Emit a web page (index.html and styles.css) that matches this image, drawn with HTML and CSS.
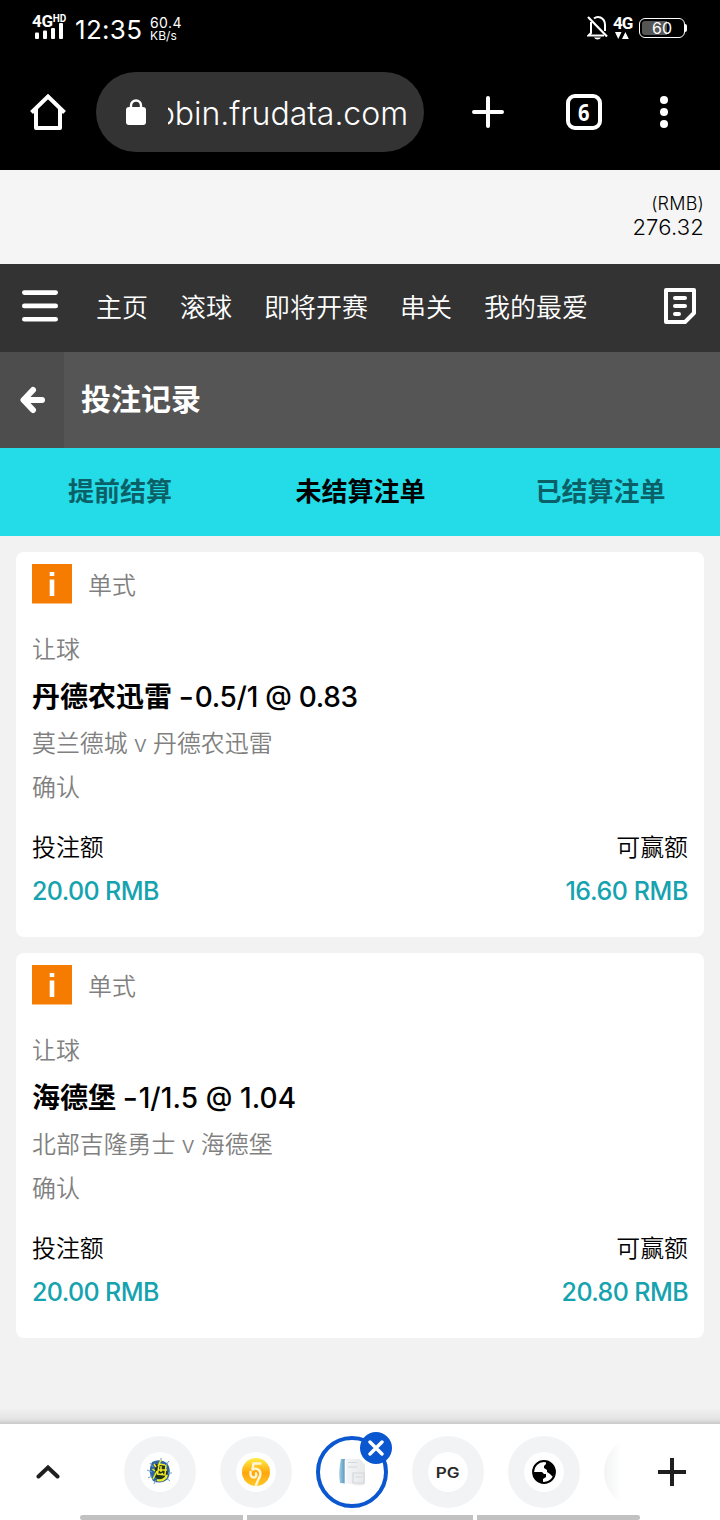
FILE: index.html
```html
<!DOCTYPE html>
<html lang="zh-CN">
<head>
<meta charset="utf-8">
<title>投注记录</title>
<link rel="stylesheet" href="styles.css">
</head>
<body>
<header class="status">
  <div class="signal">
    <div class="net">4G<span class="hd">HD</span></div>
    <svg class="bars" width="30" height="16" viewBox="0 0 30 16" fill="#fff"><rect x="0" y="9.500" width="4" height="6.500" rx="1"/><rect x="8" y="7.500" width="4" height="8.500" rx="1"/><rect x="16" y="5" width="4" height="11" rx="1"/><rect x="24" y="0" width="4" height="16" rx="1"/></svg>
  </div>
  <div class="clock">12:35</div>
  <div class="speed"><span>60.4</span><span class="unit">KB/s</span></div>
  <div class="spacer"></div>
  <svg class="bell" width="22" height="25" viewBox="0 0 22 25" fill="none" stroke="#fff" stroke-width="2"><path d="M7 3.500Q10 1 13.500 2.500Q18 4.500 18 10V16M4 7V18L1.500 20.500H17" /><path d="M1 2L20 21.500" stroke-width="2.200"/><path d="M7 22.500H14Q13 24.500 10.500 24.500Q8 24.500 7 22.500Z" fill="#fff" stroke="none"/></svg>
  <div class="data"><span>4G</span><svg width="14" height="7" viewBox="0 0 14 7" fill="#fff"><path d="M0 0H6.500L3.250 7ZM7 7H13.800L10.400 0Z"/></svg></div>
  <div class="battery"><span class="level">60</span></div>
  <i class="cap"></i>
</header>
<nav class="browser">
  <svg class="home" width="36" height="36" viewBox="0 0 36 36" fill="none" stroke="#fff" stroke-width="4" stroke-linejoin="round"><path d="M1.500 18.500L18 2.500L34.500 18.500" stroke-linejoin="miter"/><path d="M6 15V34H30V15"/></svg>
  <div class="address">
    <svg class="lock" width="20" height="26" viewBox="0 0 20 26"><path d="M5 10V6.500A5 5 0 0 1 15 6.500V10" fill="none" stroke="#fff" stroke-width="2.400"/><rect y="8" width="20" height="18" rx="3" fill="#fff"/></svg>
    <div class="url"><span>obin.frudata.com</span></div>
  </div>
  <svg class="add" width="32" height="32" viewBox="0 0 32 32" stroke="#fff" stroke-width="4" stroke-linecap="round"><path d="M2 16H30M16 2V30"/></svg>
  <div class="tabcount"><span>6</span></div>
  <svg class="more" width="8" height="32" viewBox="0 0 8 32" fill="#fff"><circle cx="4" cy="4" r="4"/><circle cx="4" cy="16" r="4"/><circle cx="4" cy="28" r="4"/></svg>
</nav>
<section class="balance"><div class="currency">(RMB)</div><div class="amount">276.32</div></section>
<nav class="menu">
  <svg width="36" height="32" viewBox="0 0 36 32" stroke="#fff" stroke-width="4.600" stroke-linecap="round"><path d="M2.300 2.600H33.700M2.300 15.900H33.700M2.300 29.200H33.700"/></svg>
  <div class="links"><a>主页</a><a>滚球</a><a>即将开赛</a><a>串关</a><a>我的最爱</a></div>
  <svg width="32" height="36" viewBox="0 0 32 36" fill="none" stroke="#fff" stroke-width="4" stroke-linejoin="round"><path d="M2 2H30V25L21 34H2Z"/><path d="M11 10H21M11 18H21M11 26H15" stroke-linecap="round"/></svg>
</nav>
<div class="titlebar">
  <div class="back"><svg width="26" height="28" viewBox="0 0 26 28" fill="none" stroke="#fff" stroke-width="6" stroke-linecap="round" stroke-linejoin="round"><path d="M13 4L3.500 14L13 24M4 14H22"/></svg></div>
  <h1>投注记录</h1>
</div>
<div class="tabs"><a>提前结算</a><a class="active">未结算注单</a><a>已结算注单</a></div>
<main class="list">
  <article class="card">
    <div class="head"><svg width="40" height="40" viewBox="0 0 40 40"><rect width="40" height="39.500" fill="#f57c00"/><path d="M17.700 8H22.300V12H17.700ZM17.700 15.500H22.300V32H17.700Z" fill="#fff"/></svg><span>单式</span></div>
    <div class="row">让球</div>
    <h2>丹德农迅雷 <span class="odds"><span class="minus">-</span>0.5/1 <span class="at">@</span> 0.83</span></h2>
    <div class="row match">莫兰德城 v 丹德农迅雷</div>
    <div class="row state">确认</div>
    <div class="pair label"><span>投注额</span><span>可赢额</span></div>
    <div class="pair money"><span>20.00 RMB</span><span class="first">16.60 RMB</span></div>
  </article>
  <article class="card">
    <div class="head"><svg width="40" height="40" viewBox="0 0 40 40"><rect width="40" height="39.500" fill="#f57c00"/><path d="M17.700 8H22.300V12H17.700ZM17.700 15.500H22.300V32H17.700Z" fill="#fff"/></svg><span>单式</span></div>
    <div class="row">让球</div>
    <h2>海德堡 <span class="odds second"><span class="minus">-</span>1/1.5 <span class="at">@</span> 1.04</span></h2>
    <div class="row match">北部吉隆勇士 v 海德堡</div>
    <div class="row state">确认</div>
    <div class="pair label"><span>投注额</span><span>可赢额</span></div>
    <div class="pair money"><span>20.00 RMB</span><span>20.80 RMB</span></div>
  </article>
</main>
<div class="fade"></div>
<footer class="dock">
  <svg class="up" width="24" height="16" viewBox="0 0 24 16" fill="none" stroke="#1f1f1f" stroke-width="4" stroke-linecap="round"><path d="M2.500 12.500L12 3.500L21.500 12.500"/></svg>
  <div class="strip">
    <div class="site"><div class="disc"><svg width="30" height="30" viewBox="0 0 30 30"><path d="M7 5Q15 1 22 6Q27 13 23 22Q16 28 8 24Q2 15 7 5Z" fill="#2d66a0"/><path d="M5 6L8 10M16 1V5M24 4L20 9M27 16H22M25 24L20 20M9 27L11 23M2 13L7 15M3 21L7 19" stroke="#6f9ccd" stroke-width="1"/><path d="M10 20Q17 27 23 16L20 8L10 7Z" fill="#22341c"/><path d="M9 7L11 10M7.500 12L10 14M8 22L12 14M16 3L13 9M14 7L20 8M14 8L12.500 17L20 18L21 8M13 13H22M16 9V15M17 16L18 18" fill="none" stroke="#f3ea28" stroke-width="1.500"/><path d="M12 23Q19 25 22 18" fill="none" stroke="#f3ea28" stroke-width="2.200"/></svg></div></div>
    <div class="site"><div class="disc"><svg width="30" height="30" viewBox="0 0 30 30"><defs><linearGradient id="gold" x2="0" y2="1"><stop stop-color="#ffed45"/><stop offset=".55" stop-color="#ffa60b"/><stop offset="1" stop-color="#ffc928"/></linearGradient></defs><circle cx="15" cy="15" r="14" fill="url(#gold)"/><path d="M19.500 6.500H12.500L11.500 12.500M11.500 12.500Q15 10.500 18 13Q21 17 17.500 22L15 28M9.500 15Q9 20.500 13 20.500Q16 20 15 16.500" fill="none" stroke="#fff6d8" stroke-width="2.400" stroke-linecap="round"/></svg></div></div>
    <div class="site current"><svg width="30" height="30" viewBox="0 0 30 30"><defs><linearGradient id="paper"><stop stop-color="#a6cde3"/><stop offset=".2" stop-color="#5c9dc3"/><stop offset=".24" stop-color="#f3f5f7"/><stop offset="1" stop-color="#e6e8ea"/></linearGradient></defs><path d="M4 2H23L28 8V27Q23 30 15 27L3 26Q1 15 4 2Z" fill="url(#paper)"/><path d="M11 5.500H20M11 10H20M16 16H27V26H16ZM18 20H25" fill="none" stroke="#d3d8dc" stroke-width="1.200"/><path d="M8.500 3V26" stroke="#fff" stroke-width="1.500"/></svg><div class="close"><svg width="16" height="16" viewBox="0 0 16 16" stroke="#fff" stroke-width="3.400" stroke-linecap="round"><path d="M2 2L14 14M14 2L2 14"/></svg></div></div>
    <div class="site"><div class="disc"><span class="pg">PG</span></div></div>
    <div class="site"><div class="disc"><svg width="24" height="24" viewBox="0 0 24 24"><circle cx="12" cy="12" r="10.900" fill="#fff" stroke="#000" stroke-width="2"/><path d="M2 12H10L12 14H14V17L11 19V23Q2 20 1 12ZM14 1V4L12 6V8L15 10V12L18 14L21 17Q25 9 20 4Q18 2 14 1Z"/></svg></div></div>
    <div class="site last"></div>
  </div>
  <svg class="newtab" width="28" height="28" viewBox="0 0 28 28" stroke="#1f1f1f" stroke-width="4"><path d="M0 14H28M14 0V28"/></svg>
</footer>
<div class="gesture"><i></i><i></i><i></i></div>
</body>
</html>
```
FILE: styles.css
```css
* { box-sizing: border-box; }
body { margin: 0; width: 720px; height: 1520px; overflow: hidden; display: flex; flex-direction: column; background: #f2f2f2; color: #000; font-family: Inter, "Noto Sans CJK SC", sans-serif; }
svg { display: block; flex: none; }
.status { height: 56px; background: #000; color: #fff; display: flex; padding: 0 32px; flex: none; }
.signal { width: 43px; padding-top: 13px; }
.net { height: 10px; display: flex; font: 700 17px/16px Roboto, sans-serif; letter-spacing: -.3px; white-space: nowrap; }
.hd { font-size: 10px; line-height: 11px; letter-spacing: 0; }
.bars { margin: 0 0 0 3px; }
.clock { width: 75px; font-size: 26px; line-height: 32px; padding-top: 14px; letter-spacing: .3px; }
.speed { padding-top: 16px; display: flex; flex-direction: column; font-size: 14px; line-height: 14px; letter-spacing: .4px; }
.speed .unit { font-size: 12px; line-height: 11px; letter-spacing: .1px; }
.spacer { flex: 1; }
.bell { margin: 15px 4px 0 0; }
.data { width: 26px; padding-top: 16px; }
.data span { display: block; height: 16px; font: 700 17px/15px Roboto, sans-serif; letter-spacing: -1px; }
.data svg { margin-left: 2px; }
.battery { width: 46px; height: 20px; margin-top: 18px; border: 1.5px solid #fff; border-radius: 6px; padding: 2px; background: linear-gradient(90deg, #555 25px, #000 25px) content-box; }
.battery .level { display: block; text-align: center; font-size: 16px; line-height: 15px; font-weight: 400; }
.cap { width: 2px; height: 8px; margin: 24px 1px 0 0; background: #fff; border-radius: 0 2px 2px 0; }
.browser { height: 114px; background: #000; display: flex; align-items: center; padding: 0 52px 2px 30px; flex: none; }
.address { width: 328px; height: 80px; margin-left: 30px; border-radius: 40px; background: #333; display: flex; align-items: center; padding: 0 16px 0 30px; }
.url { width: 240px; height: 50px; margin-left: 22px; overflow: hidden; display: flex; justify-content: flex-end; color: #fff; font-size: 32px; font-weight: 300; line-height: 54px; letter-spacing: -.05px; }
.add { margin-left: 48px; }
.tabcount { width: 36px; height: 36px; margin-left: 62px; border: 4px solid #fff; border-radius: 9px; color: #fff; display: flex; justify-content: center; font: 700 24px/27px "Open Sans", sans-serif; }
.tabcount span { transform: scaleX(.84); }
.more { margin-left: 58px; }
.balance { height: 94px; background: #f5f5f5; text-align: right; padding: 22px 16px 0; flex: none; font-weight: 300; }
.currency { font-size: 18px; line-height: 24px; letter-spacing: .2px; }
.amount { font-size: 22px; line-height: 22px; letter-spacing: .2px; }
.menu { height: 88px; background: #333; color: #fff; display: flex; align-items: center; padding: 0 24px 4px 22px; flex: none; }
.links { display: flex; gap: 32px; flex: 1; padding-left: 38px; font-size: 26px; font-weight: 350; line-height: 40px; padding-top: 4px; }
.titlebar { height: 96px; display: flex; flex: none; background: #555; color: #fff; }
.back { width: 64px; background: #4d4d4d; display: flex; align-items: center; padding-left: 20px; }
.titlebar h1 { margin: 0; padding-left: 17px; font-size: 30px; line-height: 95px; font-weight: 700; }
.tabs { height: 88px; display: grid; grid-template-columns: 240px 241px 239px; flex: none; background: #24dce8; color: #0b6067; text-align: center; font-size: 26px; font-weight: 600; line-height: 87px; }
.tabs .active { color: #000; }
.list { display: flex; flex: none; flex-direction: column; gap: 16px; padding: 16px 16px 0; height: 872px; }
.card { height: 385px; flex: none; padding: 12px 16px 0; border-radius: 8px; background: #fff; font-size: 23.9px; font-weight: 350; white-space: nowrap; }
.head { display: flex; height: 40px; gap: 16px; line-height: 44px; color: #808080; margin-bottom: 24px; }
.row { height: 44px; line-height: 44px; color: #808080; word-spacing: -.6px; }
.card h2 { margin: 0; height: 50px; line-height: 51px; font-size: 28px; font-weight: 700; }
.odds { font-weight: 500; letter-spacing: -.28px; }
.second { letter-spacing: .1px; }
.minus { display: inline-block; width: 16px; transform: translateX(1px) scaleX(1.2); }
.at { display: inline-block; font-size: 27px; transform: translateY(-2px); }
.card .match { height: 42px; line-height: 44px; }
.card .state { height: 46px; line-height: 48px; margin-bottom: 15px; }
.pair { display: flex; justify-content: space-between; height: 44px; line-height: 45px; }
.money { color: #16a3af; font-weight: 500; font-size: 25px; letter-spacing: -.6px; }
.money .first { letter-spacing: -.4px; }
.fade { height: 16px; flex: none; background: linear-gradient(#f2f2f2, #e4e4e4 70%, #c9c9c9); }
.dock { height: 91px; flex: none; background: #fff; display: flex; align-items: center; padding: 0 34px 0 36px; }
.up { margin-top: 5px; }
.strip { width: 498px; height: 91px; margin-left: 64px; display: flex; align-items: center; gap: 24px; overflow: hidden; padding-top: 2px; }
.site { width: 72px; height: 72px; flex: none; border-radius: 50%; background: #f2f3f5; display: flex; align-items: center; justify-content: center; position: relative; margin-top: 3px; }
.disc { width: 40px; height: 40px; border-radius: 50%; background: #fff; display: flex; align-items: center; justify-content: center; }
.pg { font-size: 14px; font-weight: 600; color: #292929; transform: scaleX(1.22); }
.current { border: 4px solid #0b57d0; background: #fff; }
.close { position: absolute; right: -8px; top: -8px; width: 32px; height: 32px; border-radius: 50%; background: #0b57d0; display: flex; align-items: center; justify-content: center; }
.last { background: linear-gradient(90deg, #f2f3f5, #fff 18px); }
.newtab { margin-left: auto; margin-top: 5px; }
.gesture { height: 5px; flex: none; background: #fff; padding: 0 80px; display: flex; gap: 4px; }
.gesture i { height: 5px; background: #c1c1c1; flex: 0 0 163px; }
.gesture i:nth-child(2) { flex-basis: 226px; }
.gesture i:first-child { border-radius: 3px 0 0 3px; }
.gesture i:last-child { border-radius: 0 3px 3px 0; }
```
